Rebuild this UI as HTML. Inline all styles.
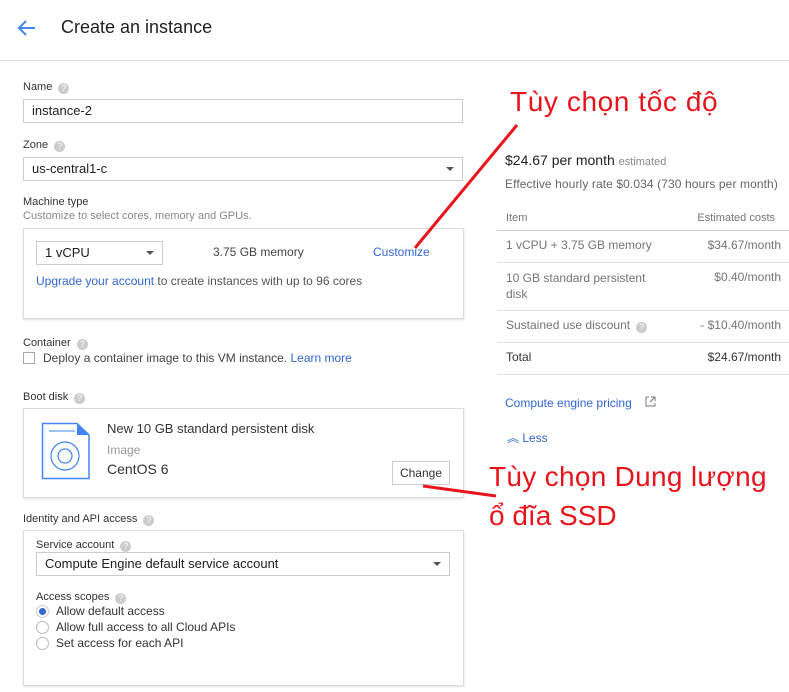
<!DOCTYPE html>
<html><head><meta charset="utf-8"><style>
body{margin:0;width:789px;height:692px;background:#fff;font-family:"Liberation Sans",Arial,sans-serif;color:#212121;position:relative;overflow:hidden}
.a{position:absolute;white-space:nowrap}
.lbl{font-size:11px;color:#333}
.q{display:inline-block;width:11px;height:11px;border-radius:50%;background:#ccc;color:#fff;font-size:9px;text-align:center;line-height:11px;margin-left:6px;vertical-align:-1px}
.box{position:absolute;border:1px solid #ddd;box-shadow:0 1px 2px rgba(0,0,0,.12);background:#fff}
.inp{position:absolute;border:1px solid #ccc;font-size:13px;padding-left:8px;box-sizing:border-box;line-height:22px}
.tri{position:absolute;width:0;height:0;border-left:4px solid transparent;border-right:4px solid transparent;border-top:4px solid #555}
.blue{color:#3367d6}
.g{color:#757575}
.row{position:absolute;left:497px;width:292px;border-top:1px solid #e0e0e0}
.red{position:absolute;color:#e8141c;font-size:28px;white-space:nowrap}
.rad{position:absolute;width:11px;height:11px;border:1px solid #bbb;border-radius:50%}
.r{position:absolute;right:8px;white-space:nowrap;text-align:right}
</style></head><body>
<div class="a" style="left:0;top:60px;width:789px;border-top:1px solid #ddd"></div>
<svg class="a" style="left:17px;top:19px" width="20" height="18" viewBox="0 0 20 18"><path d="M18 9H3M9 2L2 9l7 7" stroke="#4285f4" stroke-width="2" fill="none"/></svg>
<div class="a" style="left:61px;top:17px;font-size:18px;color:#212121">Create an instance</div>

<div class="a lbl" style="left:23px;top:81px">Name<span class="q">?</span></div>
<div class="inp" style="left:23px;top:99px;width:440px;height:24px">instance-2</div>
<div class="a lbl" style="left:23px;top:139px">Zone<span class="q">?</span></div>
<div class="inp" style="left:23px;top:157px;width:440px;height:24px">us-central1-c</div>
<div class="tri" style="left:446px;top:167px"></div>
<div class="a lbl" style="left:23px;top:196px">Machine type</div>
<div class="a" style="left:23px;top:210px;font-size:11px;color:#888">Customize to select cores, memory and GPUs.</div>
<div class="box" style="left:23px;top:228px;width:439px;height:89px"></div>
<div class="inp" style="left:36px;top:241px;width:127px;height:24px">1 vCPU</div>
<div class="tri" style="left:146px;top:251px"></div>
<div class="a" style="left:213px;top:245px;font-size:12px;color:#444">3.75 GB memory</div>
<div class="a blue" style="left:373px;top:245px;font-size:12px">Customize</div>
<div class="a" style="left:36px;top:274px;font-size:12px;color:#555"><span class="blue">Upgrade your account</span> to create instances with up to 96 cores</div>

<div class="a lbl" style="left:23px;top:337px">Container<span class="q">?</span></div>
<div class="a" style="left:23px;top:352px;width:10px;height:10px;border:1px solid #aaa"></div>
<div class="a" style="left:43px;top:351px;font-size:12px;color:#444">Deploy a container image to this VM instance. <span class="blue">Learn more</span></div>

<div class="a lbl" style="left:23px;top:391px">Boot disk<span class="q">?</span></div>
<div class="box" style="left:23px;top:408px;width:439px;height:88px"></div>
<svg class="a" style="left:41px;top:422px" width="50" height="58" viewBox="0 0 50 58"><path d="M1.5 1.5H36L48 13V56.5H1.5Z" fill="#fff" stroke="#4285f4" stroke-width="1.5"/><path d="M36 1.5V13H48Z" fill="#4285f4"/><line x1="8" y1="9" x2="34" y2="9" stroke="#4285f4"/><circle cx="24" cy="34" r="14" fill="none" stroke="#4285f4" stroke-width="1.2"/><circle cx="24" cy="34" r="7" fill="none" stroke="#4285f4" stroke-width="1.2"/></svg>
<div class="a" style="left:107px;top:421px;font-size:13px;color:#333">New 10 GB standard persistent disk</div>
<div class="a" style="left:107px;top:443px;font-size:12px;color:#999">Image</div>
<div class="a" style="left:107px;top:461px;font-size:14px;color:#333">CentOS 6</div>
<div class="a" style="left:392px;top:461px;width:56px;height:22px;border:1px solid #ccc;font-size:12px;text-align:center;line-height:22px;color:#333">Change</div>

<div class="a lbl" style="left:23px;top:513px">Identity and API access<span class="q">?</span></div>
<div class="box" style="left:23px;top:530px;width:439px;height:154px"></div>
<div class="a lbl" style="left:36px;top:539px">Service account<span class="q">?</span></div>
<div class="inp" style="left:36px;top:552px;width:414px;height:24px">Compute Engine default service account</div>
<div class="tri" style="left:433px;top:562px"></div>
<div class="a lbl" style="left:36px;top:591px">Access scopes<span class="q">?</span></div>
<div class="rad" style="left:36px;top:605px;border-color:#ccc"></div><div class="a" style="left:39px;top:608px;width:7px;height:7px;border-radius:50%;background:#3367d6"></div>
<div class="a" style="left:56px;top:604px;font-size:12px;color:#333">Allow default access</div>
<div class="rad" style="left:36px;top:621px"></div>
<div class="a" style="left:56px;top:620px;font-size:12px;color:#333">Allow full access to all Cloud APIs</div>
<div class="rad" style="left:36px;top:637px"></div>
<div class="a" style="left:56px;top:636px;font-size:12px;color:#333">Set access for each API</div>

<div class="a" style="left:505px;top:152px;font-size:14px;color:#212121">$24.67 per month <span style="font-size:11px;color:#888">estimated</span></div>
<div class="a" style="left:505px;top:177px;font-size:12px;color:#666;letter-spacing:.1px">Effective hourly rate $0.034 (730 hours per month)</div>
<div class="a g" style="left:506px;top:212px;font-size:11px">Item</div>
<div class="r g" style="top:212px;font-size:11px;right:14px">Estimated costs</div>
<div class="row" style="top:230px;border-color:#ccc"></div>
<div class="a g" style="left:506px;top:238px;font-size:12px">1 vCPU + 3.75 GB memory</div>
<div class="r g" style="top:238px;font-size:12px">$34.67/month</div>
<div class="row" style="top:262px"></div>
<div class="a g" style="left:506px;top:270px;font-size:12px;line-height:16px">10 GB standard persistent<br>disk</div>
<div class="r g" style="top:270px;font-size:12px">$0.40/month</div>
<div class="row" style="top:310px"></div>
<div class="a g" style="left:506px;top:318px;font-size:12px">Sustained use discount<span class="q">?</span></div>
<div class="r g" style="top:318px;font-size:12px">- $10.40/month</div>
<div class="row" style="top:342px"></div>
<div class="a" style="left:506px;top:350px;font-size:12px;color:#333">Total</div>
<div class="r" style="top:350px;font-size:12px;color:#333">$24.67/month</div>
<div class="row" style="top:374px"></div>
<div class="a blue" style="left:505px;top:396px;font-size:12px">Compute engine pricing</div>
<svg class="a" style="left:645px;top:396px" width="11" height="11" viewBox="0 0 11 11"><path d="M4 1H1V10H10V7M6 1H10V5M10 1L5 6" stroke="#777" fill="none"/></svg>
<div class="a blue" style="left:507px;top:429px;font-size:12px">︽ Less</div>

<svg class="a" style="left:0;top:0" width="789" height="692"><line x1="517" y1="125" x2="415" y2="248" stroke="#e8141c" stroke-width="3"/><line x1="423" y1="486" x2="496" y2="496" stroke="#e8141c" stroke-width="3"/></svg>
<div class="red" style="left:510px;top:86px;letter-spacing:.6px">Tùy chọn tốc độ</div>
<div class="red" style="left:489px;top:461px;letter-spacing:.3px">Tùy chọn Dung lượng</div>
<div class="red" style="left:489px;top:500px">ổ đĩa SSD</div>
</body></html>
